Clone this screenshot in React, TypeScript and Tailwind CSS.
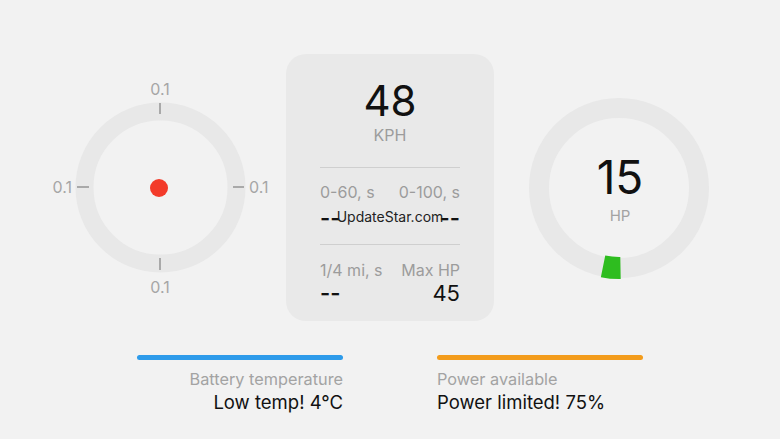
import React from "react";

const font = { fontFamily: "Inter, 'Noto Sans', sans-serif" };

function LeftGauge() {
  return (
    <div className="relative w-[240px] h-[240px] shrink-0">
      <svg width="240" height="240" viewBox="0 0 240 240" className="absolute inset-0">
        <circle cx="120.5" cy="119.5" r="76" fill="none" stroke="#e8e8e8" strokeWidth="18" />
        <line x1="120" y1="35" x2="120" y2="46" stroke="#a9a9a9" strokeWidth="2" />
        <line x1="120" y1="190" x2="120" y2="202" stroke="#a9a9a9" strokeWidth="2" />
        <line x1="37" y1="119" x2="49" y2="119" stroke="#a9a9a9" strokeWidth="2" />
        <line x1="193" y1="119" x2="204" y2="119" stroke="#a9a9a9" strokeWidth="2" />
        <circle cx="119" cy="120" r="9" fill="#f33b2a" />
        <text x="120" y="27" textAnchor="middle" fill="#a6a6a6" fontSize="16" style={font}>0.1</text>
        <text x="120" y="225" textAnchor="middle" fill="#a6a6a6" fontSize="16" style={font}>0.1</text>
        <text x="32" y="125" textAnchor="end" fill="#a6a6a6" fontSize="16" style={font}>0.1</text>
        <text x="209" y="125" textAnchor="start" fill="#a6a6a6" fontSize="16" style={font}>0.1</text>
      </svg>
    </div>
  );
}

function RightGauge() {
  const r = 80;
  const cx = 119;
  const cy = 120;
  const a0 = (90 * Math.PI) / 180;
  const a1 = (101.5 * Math.PI) / 180;
  const x0 = cx + r * Math.cos(a0);
  const y0 = cy + r * Math.sin(a0);
  const x1 = cx + r * Math.cos(a1);
  const y1 = cy + r * Math.sin(a1);
  return (
    <div className="relative w-[240px] h-[240px] shrink-0">
      <svg width="240" height="240" viewBox="0 0 240 240" className="absolute inset-0">
        <circle cx={cx} cy={cy} r={r} fill="none" stroke="#e8e8e8" strokeWidth="20" />
        <path
          d={`M ${x0 + 1.5} ${y0} A ${r} ${r} 0 0 1 ${x1} ${y1}`}
          fill="none"
          stroke="#2ebd1f"
          strokeWidth="22"
        />
      </svg>
      <div className="absolute left-0 right-0 top-[86px] flex justify-center">
        <div className="text-[46px] leading-none text-[#111]" style={font}>15</div>
      </div>
      <div className="absolute left-0 right-0 top-[140px] flex justify-center">
        <div className="text-[15px] leading-none text-[#a3a3a3]" style={font}>HP</div>
      </div>
    </div>
  );
}

function Card() {
  return (
    <div className="w-[208px] h-[267px] shrink-0 rounded-[20px] bg-[#e9e9e9] px-[34px] pt-[26px] flex flex-col" style={font}>
      <div className="text-[42px] leading-none text-center text-[#111]">48</div>
      <div className="text-[16px] leading-none text-center text-[#9c9c9c] mt-[5px]">KPH</div>
      <div className="h-px bg-[#cfcfcf] mt-[24px]" />
      <div className="flex justify-between text-[16px] leading-none text-[#9c9c9c] mt-[16px]">
        <span>0-60, s</span>
        <span>0-100, s</span>
      </div>
      <div className="relative flex justify-between text-[22px] leading-none font-semibold text-[#111] mt-[7px] h-[22px]">
        <span>--</span>
        <span>--</span>
        <span className="absolute left-1/2 top-[3px] -translate-x-1/2 text-[14px] font-normal text-[#222] leading-none whitespace-nowrap">UpdateStar.com</span>
      </div>
      <div className="h-px bg-[#cfcfcf] mt-[15px]" />
      <div className="flex justify-between text-[16px] leading-none text-[#9c9c9c] mt-[17px]">
        <span>1/4 mi, s</span>
        <span>Max HP</span>
      </div>
      <div className="flex justify-between text-[22px] leading-none text-[#111] mt-[4px] font-semibold">
        <span>--</span>
        <span className="font-normal">45</span>
      </div>
    </div>
  );
}

export default function App() {
  return (
    <div className="w-[780px] h-[439px] bg-[#f2f2f2] overflow-hidden flex flex-col" style={font}>
      <div className="flex items-center px-[40px] gap-[6px] mt-[54px]">
        <LeftGauge />
        <Card />
        <RightGauge />
      </div>
      <div className="flex justify-center gap-[94px] mt-[34px]">
        <div className="w-[206px] flex flex-col items-end">
          <div className="w-full h-[5px] rounded-full bg-[#2e9bea]" />
          <div className="text-[16.3px] leading-none text-[#a3a3a3] mt-[11px]">Battery temperature</div>
          <div className="text-[18.5px] leading-none text-[#111] mt-[6px]">Low temp! 4°C</div>
        </div>
        <div className="w-[206px] flex flex-col items-start">
          <div className="w-full h-[5px] rounded-full bg-[#f39c1c]" />
          <div className="text-[16.3px] leading-none text-[#a3a3a3] mt-[11px]">Power available</div>
          <div className="text-[18.5px] leading-none text-[#111] mt-[6px]">Power limited! 75%</div>
        </div>
      </div>
    </div>
  );
}
